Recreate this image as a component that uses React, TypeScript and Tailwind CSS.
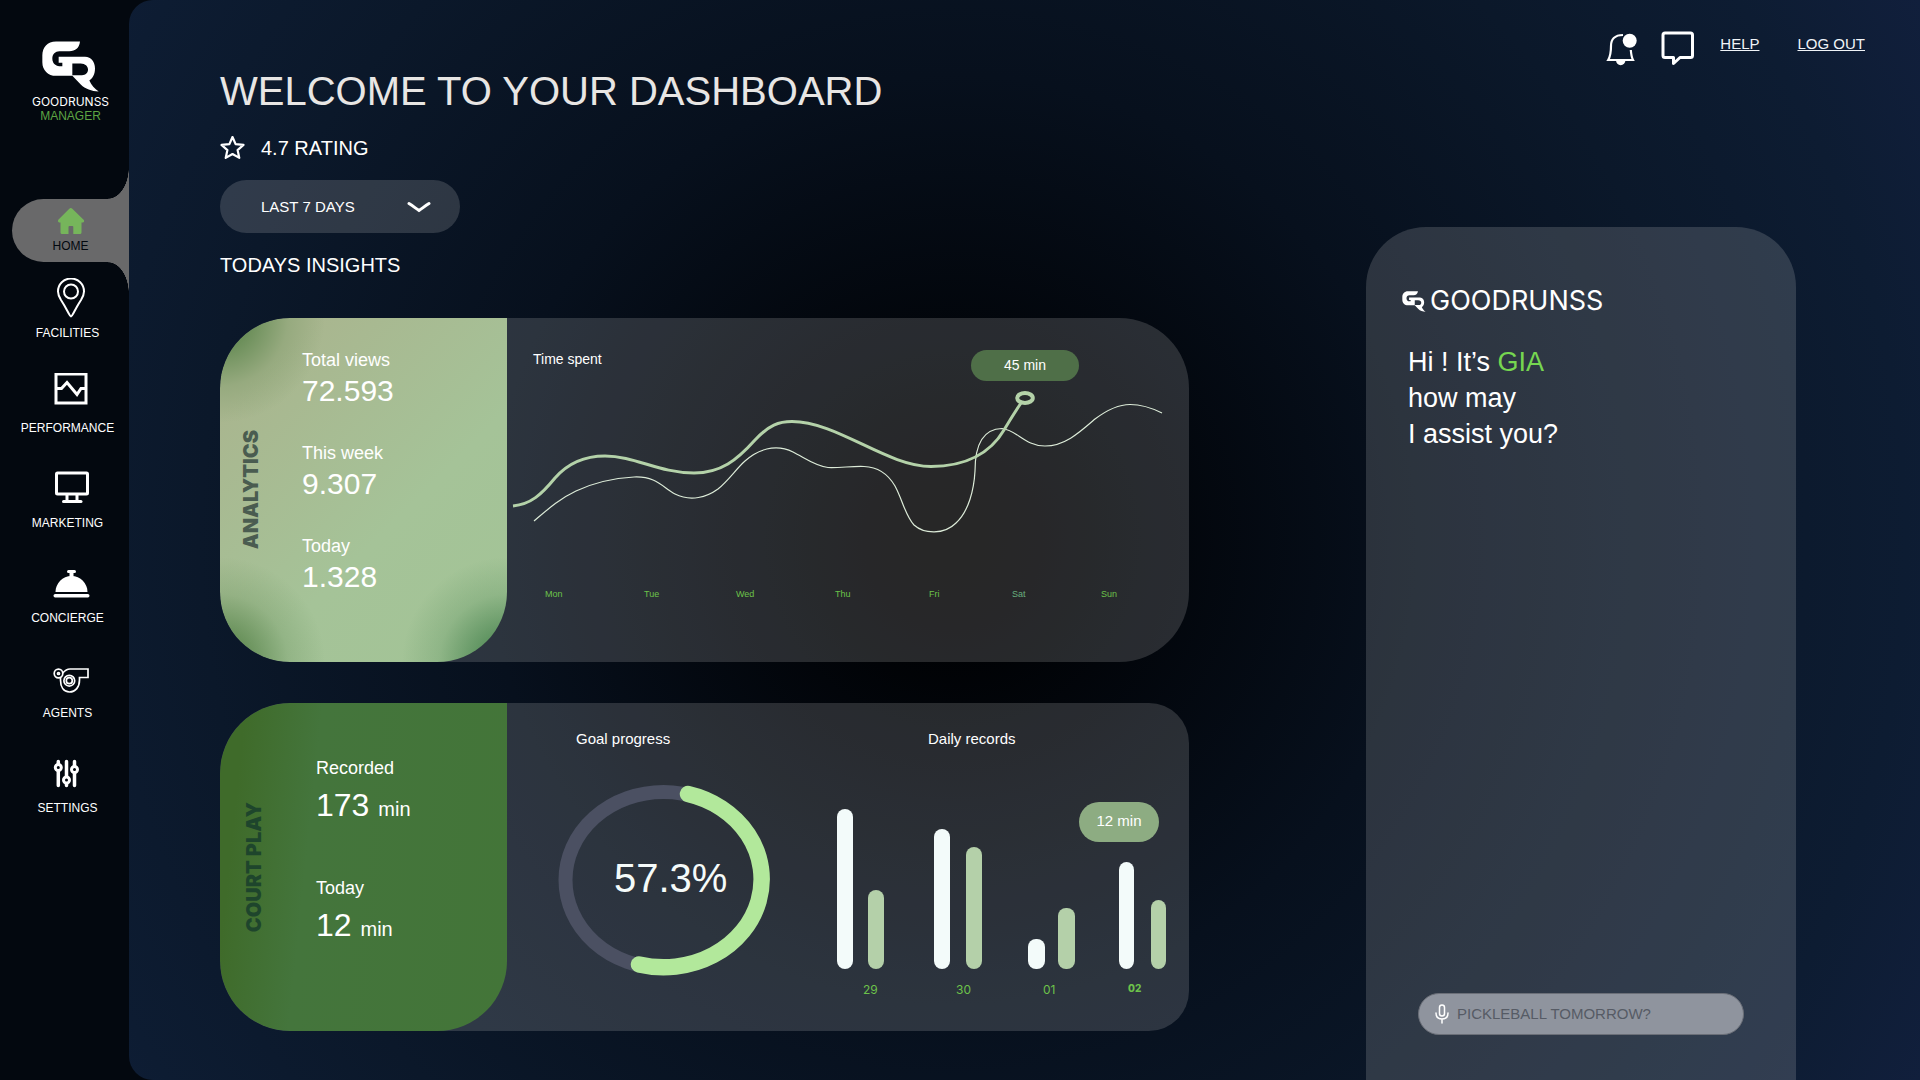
import { useState, type ReactNode } from "react";

const LogoMark = ({ className }: { className: string }) => (
  <svg viewBox="126 123 171 152" className={className} aria-hidden="true">
    <path
      fill="currentColor"
      fillRule="evenodd"
      d="M240 124H168C142 124 127 142 127 165V186C127 210 144 227 168 227H217L243 254C255 266 275 274 296 274C284 266 274 255 268 241C278 234 285 222 285 205C285 186 274 170 255 170H176V188H187V198H178C166 197 157 189 157 175C157 162 166 153 178 153H208C226 152 238 144 240 124ZM217 190H242C256 191 264 198 264 208C264 218 257 225 246 225H217Z"
    />
  </svg>
);

const navItems: { label: string; icon: ReactNode }[] = [
  {
    label: "FACILITIES",
    icon: (
      <g strokeWidth="2">
        <path d="M25 38.5C23.5 38.5 21 31 15 22C12.8 18.5 12 16.5 12 13.5A13 13 0 0 1 38 13.5C38 16.5 37.2 18.5 35 22C29 31 26.5 38.5 25 38.5Z" />
        <circle cx="25" cy="13.5" r="7" />
      </g>
    ),
  },
  {
    label: "PERFORMANCE",
    icon: (
      <g strokeWidth="3">
        <rect x="10" y="1" width="30" height="29" />
        <path d="M10 15.5H15.5L21 9.5L31 21.5L35 15.5H40" />
      </g>
    ),
  },
  {
    label: "MARKETING",
    icon: (
      <g strokeWidth="3">
        <rect x="10.5" y="5" width="31" height="21" rx="1" />
        <path d="M21 27V32M31 27V32" />
        <path d="M17.5 33.5H35" strokeLinecap="round" />
      </g>
    ),
  },
  {
    label: "CONCIERGE",
    icon: (
      <g fill="currentColor" stroke="none">
        <rect x="21" y="7" width="9" height="3" rx="1.5" />
        <rect x="23.5" y="9" width="4" height="5" />
        <path d="M9.5 29C9.5 20.5 16.5 13 25.5 13S41.5 20.5 41.5 29Z" />
        <rect x="7.5" y="31" width="36" height="3.5" rx="1.7" />
      </g>
    ),
  },
  {
    label: "AGENTS",
    icon: (
      <g strokeWidth="1.7">
        <path d="M14.5 19.5V22C14.5 29 17.5 34 23.5 34S33.5 29 33.5 22V19.5H42V11H24C20.5 11 18.5 13 16.8 15" />
        <circle cx="12.5" cy="15.5" r="4.3" />
        <circle cx="12.5" cy="15.5" r="1" />
        <circle cx="23.3" cy="22.7" r="5.4" />
        <circle cx="23.3" cy="22.7" r="3" />
      </g>
    ),
  },
  {
    label: "SETTINGS",
    icon: (
      <g strokeWidth="3.5" strokeLinecap="round">
        <path d="M12.3 8.5V32.5M20.5 8.5V32.5M28.5 8.5V32.5" />
        <g strokeWidth="3" fill="#03080f">
          <circle cx="12.3" cy="14.5" r="3" />
          <circle cx="20.5" cy="27" r="3" />
          <circle cx="28.5" cy="16.5" r="3" />
        </g>
      </g>
    ),
  },
];

const Sidebar = () => (
  <aside className="w-[129px] shrink-0 text-white">
    <div className="flex flex-col items-center pl-3 pt-[41px]">
      <LogoMark className="h-[51px] w-[57px]" />
      <span className="mt-1 font-['Inter',sans-serif] text-xs leading-3">GOODRUNSS</span>
      <span className="text-xs leading-4 text-[#5da443]">MANAGER</span>
    </div>

    <nav className="mt-[75px]">
      <a
        href="#home"
        className="relative ml-3 flex h-[63px] flex-col items-center rounded-l-[32px] bg-[#69696a] pt-2 text-[#03080f]"
      >
        <span className="absolute right-0 bottom-full h-8 w-[21px] bg-[radial-gradient(21px_32px_at_0_0,transparent_98%,#69696a_100%)]" />
        <svg viewBox="0 0 28 28" className="h-7 w-7 text-[#76b55b]" aria-hidden="true">
          <path
            fill="currentColor"
            d="M12.3 1.7Q13.8 0.4 15.3 1.7L26.6 12.8Q28 14.6 26 15.5H24.5V25.5Q24.5 27 23 27H16.3V20Q16.3 19 15.3 19H12.5Q11.5 19 11.5 20V27H5Q3.5 27 3.5 25.5V15.5H2Q0 14.6 1.3 12.8Z"
          />
        </svg>
        <span className="mt-0.5 text-xs leading-[18px]">HOME</span>
        <span className="absolute top-full right-0 h-8 w-[21px] bg-[radial-gradient(21px_32px_at_0_100%,transparent_98%,#69696a_100%)]" />
      </a>

      <ul className="mt-4 flex flex-col gap-8 pl-1.5">
        {navItems.map((item) => (
          <li key={item.label}>
            <a
              href={`#${item.label.toLowerCase()}`}
              className="flex flex-col items-center gap-[7px] text-xs leading-4"
            >
              <svg
                viewBox="0 0 44 40"
                className="h-10 w-11"
                fill="none"
                stroke="currentColor"
                aria-hidden="true"
              >
                {item.icon}
              </svg>
              {item.label}
            </a>
          </li>
        ))}
      </ul>
    </nav>
  </aside>
);

const TopBar = () => (
  <header className="flex h-[67px] items-start justify-end pt-[30px] pr-[55px] text-[15px] leading-7 text-[#f0f4f8]">
    <button type="button" aria-label="Notifications" className="mr-6">
      <svg viewBox="0 0 32 37" className="h-[37px] w-8" fill="none" stroke="#fff" strokeWidth="2.2">
        <path d="M18 5C9.5 5 6 9.5 6 16C6 22 5.5 26 3.2 30H28C26.5 27 26.2 25 25.8 20" />
        <path d="M11 30.5H20.4A4.7 4.7 0 0 1 11 30.5Z" fill="#fff" stroke="none" />
        <circle cx="24.7" cy="10.7" r="7" fill="#fff" stroke="none" />
      </svg>
    </button>
    <button type="button" aria-label="Messages" className="mr-[26px]">
      <svg
        viewBox="0 0 33 36"
        className="h-9 w-[33px]"
        fill="none"
        stroke="#fff"
        strokeWidth="3"
        strokeLinejoin="round"
      >
        <path d="M4 3H29.5Q31.5 3 31.5 5V25.5Q31.5 27.5 29.5 27.5H19L12.5 33.5V27.5H4Q2 27.5 2 25.5V5Q2 3 4 3Z" />
      </svg>
    </button>
    <a href="#help" className="mr-[38px] underline">
      HELP
    </a>
    <a href="#logout" className="underline">
      LOG OUT
    </a>
  </header>
);

const viewStats = [
  { label: "Total views", value: "72.593" },
  { label: "This week", value: "9.307" },
  { label: "Today", value: "1.328" },
];

const days = [
  { name: "Mon", x: 38 },
  { name: "Tue", x: 137 },
  { name: "Wed", x: 229 },
  { name: "Thu", x: 328 },
  { name: "Fri", x: 422 },
  { name: "Sat", x: 505, active: true },
  { name: "Sun", x: 594 },
];

const AnalyticsCard = () => (
  <section className="flex h-[344px] overflow-hidden rounded-[70px] bg-[#d9d9d9]/18">
    <div className="flex w-[287px] shrink-0 rounded-l-[70px] rounded-br-[70px] bg-[radial-gradient(circle_at_0_0,#4b7a3e_0,#4b7a3e99_35px,#4b7a3e33_68px,transparent_105px),radial-gradient(circle_at_0_100%,#4b7a3e_0,#4b7a3e99_35px,#4b7a3e33_68px,transparent_105px),radial-gradient(circle_at_100%_100%,#3f7d48_0,#3f7d4899_35px,#3f7d4833_68px,transparent_105px),linear-gradient(135deg,#a9b68f_15%,#a5c398_60%,#a2c496)] text-white">
      <div className="flex w-[82px] items-center justify-center pr-5">
        <h2 className="rotate-180 font-['Inter',sans-serif] text-xl leading-6 font-black text-[#4a5c50] [writing-mode:vertical-rl]">
          ANALYTICS
        </h2>
      </div>
      <dl className="flex flex-col gap-[31px] pt-[30px]">
        {viewStats.map((stat) => (
          <div key={stat.label}>
            <dt className="text-lg leading-6">{stat.label}</dt>
            <dd className="text-3xl leading-[38px]">{stat.value}</dd>
          </div>
        ))}
      </dl>
    </div>

    <div className="min-w-0 flex-1">
      <div className="flex items-start justify-between pt-8 pr-[110px] pl-[26px] text-sm text-white">
        <h3 className="leading-[18px]">Time spent</h3>
        <span className="rounded-2xl bg-[#4f6f48] px-[33px] py-1.5 leading-[19px]">45 min</span>
      </div>
      <svg viewBox="0 0 682 280" className="w-full" fill="none" role="img" aria-label="Time spent per day">
        <path
          stroke="#dcebd8"
          strokeWidth="1.2"
          d="M27 140C40 129 52 118 69 110C88 101 110 97 127 96C150 95 156 107 168 113C184 121 200 116 211 108C222 99 229 88 238 80C250 69 268 62 286 71C298 77 308 85 321 86.5C333 87 345 85 357 85.5C372 86 381 93 388 105C396 120 398 134 407 144C417 153 437 154 449 142C462 130 467 108 468 90C468 65 475 48 495 47.5C510 49 518 65 538 65C558 65 573 51 588 38C600 29 611 23.5 623 23.5C635 23.5 645 27 655 32"
        />
        <path
          stroke="#b4d2a9"
          strokeWidth="3"
          d="M6 125C24 123 34 114 48 97C62 81 78 75 98 75C128 75 152 92 187 92C214 92 230 79 248 59C262 44 272 40.5 285 40.5C330 40.5 380 85.5 424 85.5C460 85.5 484 71 497 49C503 39 508 31 514 22"
        />
        <ellipse cx="518" cy="17" rx="7.8" ry="5" stroke="#b4d2a9" strokeWidth="4" />
        <g fontSize="9">
          {days.map((day) => (
            <text key={day.name} x={day.x} y="216" fill={day.active ? "#67b07f" : "#6cc24a"}>
              {day.name}
            </text>
          ))}
        </g>
      </svg>
    </div>
  </section>
);

const playStats = [
  { label: "Recorded", value: 173 },
  { label: "Today", value: 12 },
];

const records = [
  { day: "29", x: 37, width: 16, offset: 31, played: 160, goal: 79, labelX: 63 },
  { day: "30", x: 134, width: 16, offset: 32, played: 140, goal: 122, labelX: 156 },
  { day: "01", x: 228, width: 17, offset: 30, played: 30, goal: 61, labelX: 243 },
  { day: "02", x: 319, width: 15, offset: 32, played: 107, goal: 69, labelX: 328, active: true },
];

const CourtPlayCard = () => (
  <section className="flex h-[328px] overflow-hidden rounded-l-[70px] rounded-r-[40px] bg-[#d9d9d9]/18 text-white">
    <div className="flex w-[287px] shrink-0 rounded-l-[70px] rounded-br-[70px] bg-[linear-gradient(96deg,#3f6b2a_8%,#44753c_32%,#437538)]">
      <div className="flex w-24 items-center justify-center pr-7">
        <h2 className="rotate-180 font-['Inter',sans-serif] text-xl leading-6 font-black text-[#1e452c] [writing-mode:vertical-rl]">
          COURT PLAY
        </h2>
      </div>
      <dl className="flex flex-col gap-[46px] pt-[53px]">
        {playStats.map((stat) => (
          <div key={stat.label}>
            <dt className="text-lg leading-6">{stat.label}</dt>
            <dd className="text-[32px] leading-[50px]">
              {stat.value} <span className="text-xl">min</span>
            </dd>
          </div>
        ))}
      </dl>
    </div>

    <div className="grid min-w-0 flex-1 grid-cols-[293fr_389fr] pt-[26px] text-[15px] leading-5">
      <div>
        <h3 className="pl-[69px]">Goal progress</h3>
        <svg viewBox="0 0 293 282" className="w-full" fill="none" role="img" aria-label="Goal progress 57.3%">
          <ellipse cx="156.5" cy="131" rx="98" ry="88" stroke="#4b5062" strokeWidth="14" />
          <path
            d="M181 45A97 87 0 0 1 132 215.5"
            stroke="#b2e89b"
            strokeWidth="16.5"
            strokeLinecap="round"
          />
          <text x="107" y="143" fontSize="40" fill="#f5fbfa">
            57.3%
          </text>
        </svg>
      </div>
      <div>
        <h3 className="pl-32">Daily records</h3>
        <svg viewBox="0 0 389 282" className="w-full" role="img" aria-label="Daily records">
          {records.map((record) => (
            <g key={record.day}>
              <rect
                x={record.x}
                y={220 - record.played}
                width={record.width}
                height={record.played}
                rx="8"
                fill="#f3fbfa"
              />
              <rect
                x={record.x + record.offset}
                y={220 - record.goal}
                width={record.width}
                height={record.goal}
                rx="8"
                fill="#b4d0a9"
              />
              <text
                x={record.labelX}
                y={record.active ? 243 : 245}
                fontFamily="Inter, sans-serif"
                fontSize={record.active ? 10 : 12}
                fontWeight={record.active ? 800 : 400}
                fill="#6cc24a"
              >
                {record.day}
              </text>
            </g>
          ))}
          <rect x="279" y="53" width="80" height="40" rx="20" fill="#8dac82" />
          <text x="319" y="77" fontSize="15" textAnchor="middle" fill="#fff">
            12 min
          </text>
        </svg>
      </div>
    </div>
  </section>
);

const AssistantPanel = () => {
  const [question, setQuestion] = useState("");

  return (
    <aside className="mt-40 flex flex-col rounded-t-[60px] bg-[#d9d9d9]/18 pt-[62px] pb-[45px] text-white">
      <div className="flex h-6 items-center gap-1 pl-9">
        <LogoMark className="h-[21px] w-6" />
        <span className="font-['Inter',sans-serif] text-[27px] leading-6">GOODRUNSS</span>
      </div>
      <p className="mt-[31px] pl-[42px] text-[27px] leading-9">
        Hi ! It’s <span className="text-[#76d650]">GIA</span>
        <br />
        how may
        <br />I assist you?
      </p>
      <form
        onSubmit={(e) => e.preventDefault()}
        className="mx-[52px] mt-auto flex h-[42px] items-center gap-2 rounded-full border border-[#6b6f78] bg-[#8f949e] px-4"
      >
        <svg
          viewBox="0 0 14 20"
          className="h-5 w-3.5 shrink-0"
          fill="none"
          stroke="#fff"
          strokeWidth="1.5"
          strokeLinecap="round"
          aria-hidden="true"
        >
          <rect x="4.5" y="1" width="5" height="11" rx="2.5" />
          <path d="M1 9C1 13 3.5 15 7 15S13 13 13 9M7 15V19" />
        </svg>
        <input
          type="text"
          aria-label="Ask GIA"
          value={question}
          onChange={(e) => setQuestion(e.target.value)}
          placeholder="PICKLEBALL TOMORROW?"
          className="min-w-0 flex-1 bg-transparent text-[15px] leading-5 text-[#2b303a] outline-none placeholder:text-[#565b65]"
        />
      </form>
    </aside>
  );
};

const Dashboard = () => {
  const [range, setRange] = useState("7");

  return (
    <div className="flex min-h-screen bg-[#03080f] font-['Liberation_Sans',Arial,sans-serif]">
      <Sidebar />
      <main className="flex min-w-0 flex-1 flex-col rounded-l-3xl bg-[radial-gradient(circle_at_46%_50%,#000_0,#000103_8%,#07101d_42%,#0b182a_68%,#0d1c32_86%,#111f3c_100%)]">
        <TopBar />
        <div className="grid flex-1 grid-cols-[969fr_430fr] gap-[177px] pr-[124px] pl-[91px]">
          <div className="pb-[49px] text-white">
            <h1 className="text-[40px] leading-[48px] text-[#e8e6e4]">WELCOME TO YOUR DASHBOARD</h1>

            <div className="mt-[21px] flex items-center gap-4 text-xl leading-6">
              <svg
                viewBox="0 0 25 24"
                className="h-6 w-[25px]"
                fill="none"
                stroke="currentColor"
                strokeWidth="2.2"
                strokeLinejoin="round"
                aria-hidden="true"
              >
                <path d="M12.5 1L15.6 8.1L23.5 8.9L17.6 14.1L19.3 21.9L12.5 18L5.7 21.9L7.4 14.1L1.5 8.9L9.4 8.1Z" />
              </svg>
              <p>4.7 RATING</p>
            </div>

            <div className="relative mt-5 w-60">
              <select
                aria-label="Date range"
                value={range}
                onChange={(e) => setRange(e.target.value)}
                className="block h-[53px] w-full appearance-none rounded-full bg-[#d9d9d9]/18 pt-px pl-[41px] text-[15px] text-white outline-none"
              >
                <option value="7">LAST 7 DAYS</option>
                <option value="30">LAST 30 DAYS</option>
                <option value="90">LAST 90 DAYS</option>
              </select>
              <svg
                viewBox="0 0 24 12"
                className="pointer-events-none absolute top-[21px] right-[29px] h-3 w-6"
                fill="none"
                stroke="currentColor"
                strokeWidth="3"
                strokeLinecap="round"
                aria-hidden="true"
              >
                <path d="M2 2.5C6 5 9 7.5 12 9.5C15 7.5 18 5 22 2.5" />
              </svg>
            </div>

            <h2 className="mt-5 text-xl leading-6">TODAYS INSIGHTS</h2>

            <div className="mt-[41px] flex flex-col gap-[41px]">
              <AnalyticsCard />
              <CourtPlayCard />
            </div>
          </div>

          <AssistantPanel />
        </div>
      </main>
    </div>
  );
};

export default Dashboard;
